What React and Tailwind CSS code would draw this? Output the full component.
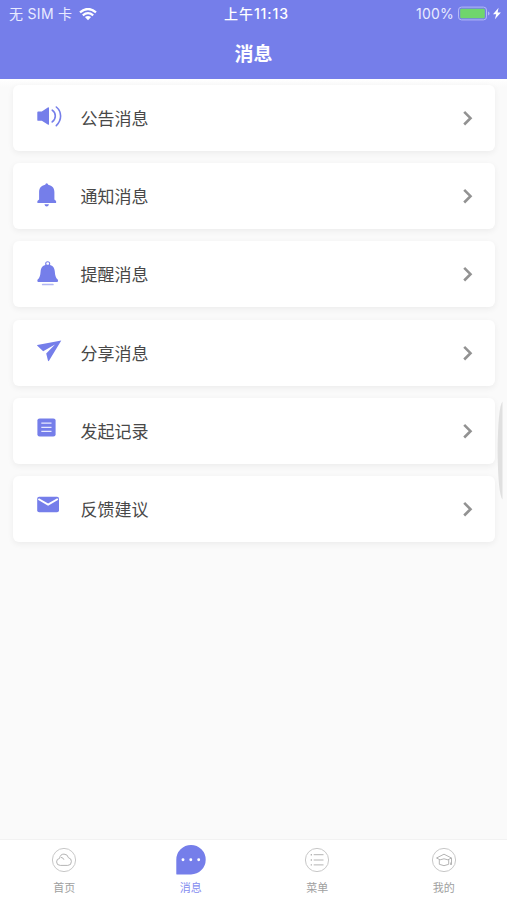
import React from 'react';

const icons = {
  horn: (
    <>
      <path d="M5.200 9.500h3.600l6-4.100q1.200-.7 1.200.7v15.800q0 1.400-1.200.7l-6-3.800H5.200q-.9 0-.9-.9v-7.500q0-.9.9-.9z" fill="#757eea" />
      <path d="M19.200 8.200q3.100 2.200 3.100 5.700t-3.100 6M23.300 5q4.300 3.600 4.300 9t-4.300 9.600" fill="none" stroke="#757eea" strokeWidth="1.600" strokeLinecap="round" />
    </>
  ),
  bell: (
    <path d="M13.700 3.300q1.200 0 1.500 1.500c4.200.8 6.200 3.500 6.200 7.400v7.200l1.700 1.500v2H4.400v-2l1.700-1.500v-7.200c0-3.900 1.900-6.600 6.100-7.400q.3-1.500 1.500-1.500zM11.400 24.300h4.600q-.6 2.200-2.300 2.200t-2.300-2.200z" fill="#757eea" />
  ),
  alarm: (
    <>
      <circle cx="14.700" cy="5.700" r="2" fill="none" stroke="#757eea" strokeWidth="1.100" />
      <path d="M14.700 6.800c4.600 0 6.800 2.700 7.100 6.600.3 4 .8 6 3.100 8.400q.8 2.100-.7 2.100h-19q-1.500 0-.7-2.100c2.300-2.400 2.800-4.400 3.100-8.400.3-3.900 2.500-6.600 7.100-6.600z" fill="#757eea" />
      <path d="M9.700 26.500h10.200" stroke="#757eea" strokeWidth="1.700" strokeLinecap="round" opacity=".55" />
    </>
  ),
  plane: (
    <path d="M28.300 3.400 4.300 7.900q-.5.300 0 .8l5.900 5.500 11.800-6.600-8.800 8.800 1.800 7.300q.4.900 1 .1z" fill="#757eea" />
  ),
  list: (
    <>
      <rect x="4.400" y="3.400" width="18.200" height="18" rx="2.200" fill="#757eea" />
      <path d="M8.300 8.200h10.200M8.300 12.300h10.200M8.300 16.400h10.200" stroke="#e7e9ff" strokeWidth="1.300" />
    </>
  ),
  mail: (
    <>
      <rect x="4.200" y="3.700" width="21.800" height="15.500" rx="2" fill="#757eea" />
      <path d="m5.400 6 9.700 5.700L24.800 6" fill="none" stroke="#fff" strokeWidth="2" />
    </>
  ),
};

const rows = [
  ['horn', '公告消息'],
  ['bell', '通知消息'],
  ['alarm', '提醒消息'],
  ['plane', '分享消息'],
  ['list', '发起记录'],
  ['mail', '反馈建议'],
];

function Row({ icon, label }) {
  return (
    <a className="flex h-[66px] items-center rounded-md bg-white pr-[18px] pl-5 shadow-[0_2px_6px_rgba(0,0,0,0.06)]">
      <svg className="size-8 shrink-0" viewBox="0 0 32 32">{icons[icon]}</svg>
      <span className="mt-0.5 ml-[15.500px] flex-1 text-[17px] leading-6 text-[#484848]">{label}</span>
      <svg className="size-[18px]" viewBox="0 0 18 18" fill="none" stroke="#929292" strokeWidth="2.600">
        <path d="m5.200 2.900 6.300 6.300-6.300 6.300" />
      </svg>
    </a>
  );
}

function StatusBar() {
  return (
    <div className="grid h-7 grid-cols-3 items-center pr-[6px] pl-[9px] text-[14px] leading-5 text-[#e9ebff]">
      <div className="flex items-center">
        <span className="whitespace-pre tracking-[0.3px]">无 SIM 卡</span>
        <svg className="ml-[7px] h-[13px] w-[18px]" viewBox="0 0 18 13" fill="none" stroke="#fff" strokeWidth="2.300">
          <path d="M1 4.300q8-6.600 16 0M3.800 7.300q5.200-4.300 10.400 0" />
          <path d="M5.900 9.100q3.100-2.400 6.200 0L9 12.300z" fill="#fff" stroke="none" />
        </svg>
      </div>
      <span className="pl-[3px] text-center text-[14px] font-medium tracking-[0.900px] text-white">上午11:13</span>
      <div className="flex items-center justify-end">
        <span className="tracking-[0.2px]">100%</span>
        <svg className="ml-[3px] h-4 w-[44px]" viewBox="0 0 44 16">
          <rect x="1.500" y="1.100" width="28" height="12.800" rx="3" fill="none" stroke="#b4b9f6" strokeWidth="1" />
          <rect x="3.200" y="2.700" width="24.600" height="9.600" rx="1.200" fill="#70d66c" />
          <path d="M31 5.500q1.500.4 1.500 2T31 9.500z" fill="#b4b9f6" />
          <path d="m41.600 1.800-5.600 6.400h3.200l-1.300 5 6-6.800h-3.300z" fill="#fff" />
        </svg>
      </div>
    </div>
  );
}

const tabIcons = {
  home: (
    <path d="M11.300 20.400q-3.700 0-3.700-3.500 0-3.100 3-3.500.5-4.300 4.400-4.300 3.500 0 4.500 3.700 2.900.5 2.900 3.700 0 3.900-3.600 3.900zM12 12.400q2.300.2 2.900 2.300" />
  ),
  menu: (
    <>
      <path d="M11.700 9.700h9.800M11.700 15h9.800M11.700 19.900h9.800" />
      <path d="M8.700 9.700h1.300M8.700 15h1.300M8.700 19.900h1.300" strokeWidth="1.400" />
    </>
  ),
  mine: (
    <path d="m7.500 13 7.500-3.800 7.500 3.800-3.600 1.800q-3.900-2-7.800 0zM10.300 14.700v4.600q4.700 2.800 9.400 0v-4.600M22.500 13v6.800M21.700 17.500v2.500" />
  ),
};

function Tab({ icon, label, active }) {
  return (
    <a className={active ? 'flex flex-col items-center pt-[5px] text-[#858df0]' : 'flex flex-col items-center pt-[5px] text-[#a0a0a0]'}>
      {active ? (
        <svg className="size-[30px]" viewBox="0 0 30 30">
          <path d="M.3 29V14.700A14.700 14.700 0 1 1 15 29.400H.7q-.4 0-.4-.4z" fill="#757eea" />
          <g fill="#fff">
            <circle cx="7" cy="14.800" r="1.450" />
            <circle cx="14.800" cy="14.800" r="1.450" />
            <circle cx="22.700" cy="14.800" r="1.450" />
          </g>
        </svg>
      ) : (
        <svg className="size-[30px]" viewBox="0 0 30 30" fill="none" stroke="#b4b4b4" strokeWidth="1">
          <circle cx="15" cy="15" r="11.600" stroke="#c8c8c8" />
          {tabIcons[icon]}
        </svg>
      )}
      <span className="mt-[5px] text-[11px] leading-4">{label}</span>
    </a>
  );
}

export default function App() {
  return (
    <div className="relative flex h-[900px] w-full flex-col overflow-hidden bg-[#fafafa] font-['Inter','Noto_Sans_CJK_SC',sans-serif]">
      <header className="h-[79px] shrink-0 bg-[#757eea]">
        <StatusBar />
        <h1 className="mt-[13px] text-center text-[19px] leading-7 font-bold text-white">消息</h1>
      </header>
      <main className="flex flex-1 flex-col gap-[12.200px] bg-[linear-gradient(#fff_0px,#fafafa_8px)] pt-[6px] pr-3 pl-[13px]">
        {rows.map(([icon, label]) => (
          <Row key={label} icon={icon} label={label} />
        ))}
      </main>
      <nav className="grid h-[61px] shrink-0 grid-cols-4 border-t border-[#f2f2f2] bg-white pl-px">
        <Tab icon="home" label="首页" />
        <Tab label="消息" active />
        <Tab icon="menu" label="菜单" />
        <Tab icon="mine" label="我的" />
      </nav>
      <svg className="absolute top-[401px] right-0 h-[99px] w-[11px]" viewBox="0 0 11 99">
        <path d="M6.500.5Q2 6 1.600 50 2 93 6.500 98.500z" fill="#e0e0e0" />
      </svg>
    </div>
  );
}
